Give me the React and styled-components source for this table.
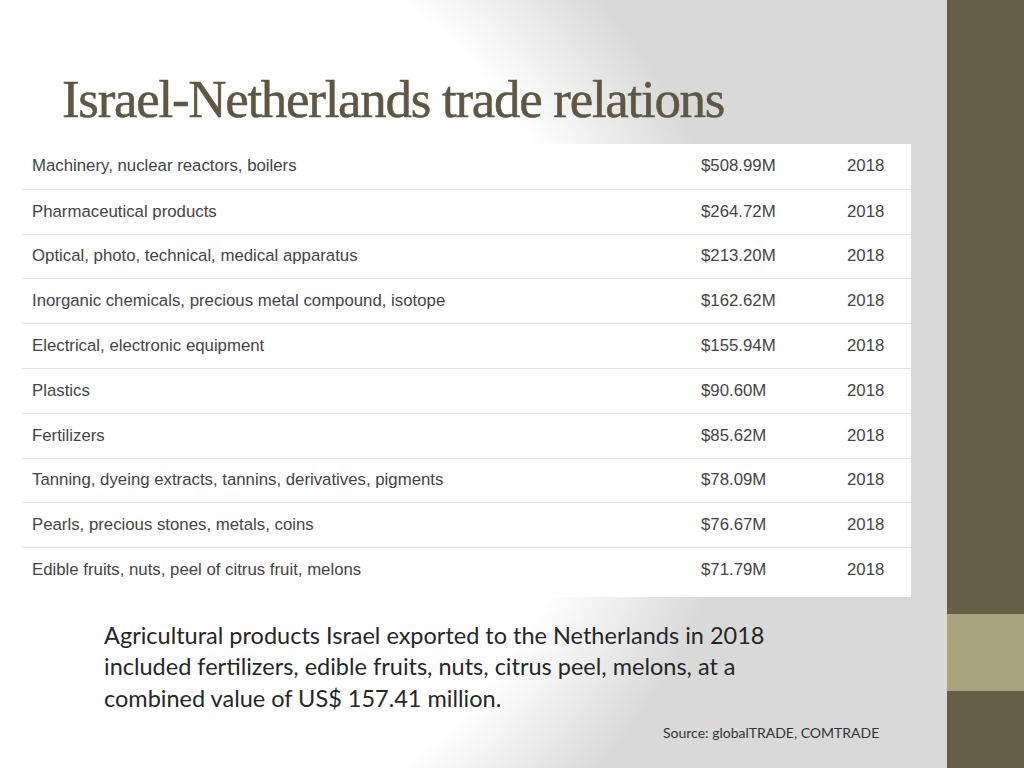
import React from 'react';
import styled, { createGlobalStyle } from 'styled-components';

const GlobalStyle = createGlobalStyle`
  html, body {
    margin: 0;
    padding: 0;
  }
`;

const rows = [
    { name: 'Machinery, nuclear reactors, boilers', value: '$508.99M', year: '2018' },
    { name: 'Pharmaceutical products', value: '$264.72M', year: '2018' },
    { name: 'Optical, photo, technical, medical apparatus', value: '$213.20M', year: '2018' },
    { name: 'Inorganic chemicals, precious metal compound, isotope', value: '$162.62M', year: '2018' },
    { name: 'Electrical, electronic equipment', value: '$155.94M', year: '2018' },
    { name: 'Plastics', value: '$90.60M', year: '2018' },
    { name: 'Fertilizers', value: '$85.62M', year: '2018' },
    { name: 'Tanning, dyeing extracts, tannins, derivatives, pigments', value: '$78.09M', year: '2018' },
    { name: 'Pearls, precious stones, metals, coins', value: '$76.67M', year: '2018' },
    { name: 'Edible fruits, nuts, peel of citrus fruit, melons', value: '$71.79M', year: '2018' },
];

export default function App() {
    return (
        <>
            <GlobalStyle />
            <Slide>
                <Main>
                    <Title>Israel-Netherlands trade relations</Title>
                    <Table>
                        {rows.map((row) => (
                            <Row key={row.name}>
                                <Cell>{row.name}</Cell>
                                <Cell>{row.value}</Cell>
                                <Cell>{row.year}</Cell>
                            </Row>
                        ))}
                    </Table>
                    <Summary>
                        Agricultural products Israel exported to the Netherlands in 2018
                        included fertilizers, edible fruits, nuts, citrus peel, melons, at a
                        combined value of US$ 157.41 million.
                    </Summary>
                    <Source>Source: globalTRADE, COMTRADE</Source>
                </Main>
                <Sidebar>
                    <Band $tone='dark' $height='614px' />
                    <Band $tone='light' $height='77px' />
                    <Band $tone='dark' />
                </Sidebar>
            </Slide>
        </>
    );
}

const Slide = styled.div`
    width: 1024px;
    height: 768px;
    display: flex;
    overflow: hidden;
`

const Main = styled.div`
    flex: 1;
    display: flex;
    flex-direction: column;
    background: radial-gradient(ellipse 750px 644px at 0px 384px, #ffffff 0%, #ffffff 80%, #d9d9d9 100%);
`

const Title = styled.h1`
    margin: 69px 0 0 62px;
    height: 75px;
    font-family: "Liberation Serif", "DejaVu Serif", serif;
    font-weight: normal;
    font-size: 53px;
    letter-spacing: -1.3px;
    line-height: 60px;
    color: #5f5741;
    -webkit-text-stroke: 0.5px #5f5741;
`

const Table = styled.div`
    margin-left: 22px;
    width: 889px;
    padding-bottom: 5px;
    background: #ffffff;
`

const Row = styled.div`
    display: grid;
    grid-template-columns: 669px 146px 1fr;
    height: 44.8px;
    align-items: center;
    padding-left: 10px;
    box-sizing: border-box;
    border-top: 1px solid #e2e2e2;

    &:first-child {
        border-top: none;
    }
`

const Cell = styled.div`
    font-family: "Liberation Sans", Arial, sans-serif;
    font-size: 16.8px;
    color: #444444;
`

const Summary = styled.p`
    margin: 23px 0 0 104px;
    width: 700px;
    font-family: Lato, "Open Sans", sans-serif;
    font-size: 23.5px;
    line-height: 31.5px;
    color: #262626;
`

const Source = styled.div`
    margin: 10px 0 0 663px;
    font-family: Lato, "Open Sans", sans-serif;
    font-size: 14px;
    color: #333333;
`

const Sidebar = styled.div`
    width: 77px;
    display: flex;
    flex-direction: column;
`

const Band = styled.div`
    height: ${(p) => p.$height || 'auto'};
    flex: ${(p) => (p.$height ? 'none' : '1')};
    background: ${(p) => (p.$tone === 'light' ? '#a9a47e' : '#675e47')};
`
